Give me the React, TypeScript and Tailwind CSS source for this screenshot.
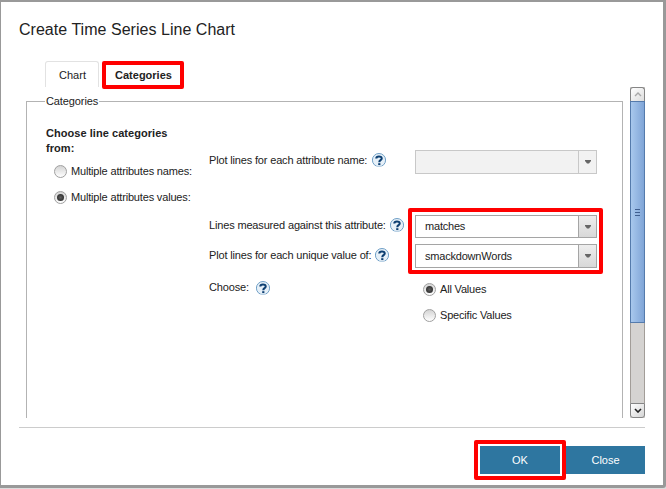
import React from 'react';

function Help() {
  return (
    <svg className="block h-[14px] w-[14px] shrink-0" viewBox="0 0 14 14" fill="none">
      <defs>
        <clipPath id="help-clip"><rect width="14" height="13.5" /></clipPath>
      </defs>
      <g clipPath="url(#help-clip)">
        <circle cx="7" cy="7.1" r="6.6" fill="#e6f0f8" stroke="#6f9fc6" strokeWidth="1" />
        <path d="M4.3 5.5C4.3 2.8 9.7 2.8 9.7 5.4C9.7 7.3 7.3 7 7.3 9.2" stroke="#0d3f72" strokeWidth="2.1" />
        <rect x="6.2" y="10.2" width="2.2" height="1.9" fill="#0d3f72" />
      </g>
    </svg>
  );
}

function Radio({ checked }: { checked?: boolean }) {
  return (
    <span className="flex h-[13px] w-[13px] shrink-0 items-center justify-center rounded-full border border-[#a0a0a0] bg-linear-to-b from-[#d4d4d4] to-[#ffffff]">
      {checked && <span className="h-[7px] w-[7px] rounded-full bg-radial from-[#606060] to-[#202020]" />}
    </span>
  );
}

function Select({ value, disabled, size }: { value: string; disabled?: boolean; size: string }) {
  return (
    <div className={`flex w-[182px] border ${size} ${disabled ? 'border-[#c8c8c8] bg-[#f2f2f2]' : 'border-[#a5a5a5] bg-white'}`}>
      <div className="flex flex-1 items-center pl-[9px] tracking-[-0.2px]">{value}</div>
      <div className={`flex w-[18px] items-center justify-center border-l ${disabled ? 'border-[#c8c8c8] bg-[#f2f2f2]' : 'border-[#a5a5a5] bg-linear-to-b from-[#eeeeee] to-[#d8d8d8]'}`}>
        <svg className="h-[4px] w-[6px]" viewBox="0 0 6 4"><path d="M0 0H6V1L4 3.5H2L0 1Z" fill="#666666" /></svg>
      </div>
    </div>
  );
}

function ScrollBar() {
  return (
    <div className="flex h-[331px] w-[15px] flex-col bg-[#d5d3d1]">
      <div className="flex h-[14px] items-center justify-center rounded-t-[3px] border border-b-0 border-[#858585] bg-linear-to-br from-white to-[#dddddd]">
        <svg className="h-[5px] w-[8px]" viewBox="0 0 8 5" fill="none"><path d="M1 4L4 1L7 4" stroke="#a8a8a8" strokeWidth="1.4" /></svg>
      </div>
      <div className="flex h-[222px] flex-col items-center justify-center gap-[2px] border border-[#557bac] bg-linear-to-r from-[#a8c8ed] to-[#80a5d7]">
        <i className="h-px w-[5px] bg-[#405f90]" />
        <i className="h-px w-[5px] bg-[#405f90]" />
        <i className="h-px w-[5px] bg-[#405f90]" />
      </div>
      <div className="h-[80px] border-x border-[#a29d98]" />
      <div className="flex h-[15px] items-center justify-center rounded-b-[3px] border border-[#858585] bg-linear-to-br from-white to-[#d5d5d5]">
        <svg className="h-[5px] w-[8px]" viewBox="0 0 8 5" fill="none"><path d="M1 1L4 4L7 1" stroke="#222222" strokeWidth="1.6" /></svg>
      </div>
    </div>
  );
}

export default function App() {
  return (
    <div className="h-[489px] w-[666px] overflow-hidden bg-[#dcdcdc] font-['Liberation_Sans',Arial,sans-serif] text-[11px] leading-[15px] text-[#222222]">
      <div className="flex h-[488px] flex-col rounded-br-[3px] border-t-2 border-r-[3px] border-b-[3px] border-l border-[#999999] bg-white pr-[18px] pl-[18px]">
        <h1 className="mt-[18px] h-[20px] text-[16px] leading-[20px] whitespace-nowrap tracking-[0.03px]">Create Time Series Line Chart</h1>
        <div className="mt-[21px] flex h-[26px] pl-[26px]">
          <div className="h-[26px] w-[54px] rounded-t-[3px] border border-b-0 border-[#e2e2e2] pt-[6px] pl-px text-center">Chart</div>
          <div className="ml-[3px] flex h-[28px] w-[82px] shrink-0 items-center justify-center rounded-[2px] border-4 border-[#ff0000] bg-white pl-px font-bold">Categories</div>
        </div>
        <div className="flex h-[331px] shrink-0 justify-between overflow-hidden">
          <div className="ml-[7px] w-[597px] pt-[7px]">
            <fieldset className="h-[350px] border border-[#b3b3b3] pl-[18px]">
              <legend className="px-px leading-[15px] tracking-[-0.1px]">Categories</legend>
              <div className="flex pl-px">
                <section className="w-[163px] pt-[17px] tracking-[-0.17px]">
                  <div className="w-[140px] font-bold tracking-[0.05px]">Choose line categories from:</div>
                  <label className="mt-[8px] ml-[8px] flex h-[15px] items-center gap-[4px] whitespace-nowrap"><Radio />Multiple attributes names:</label>
                  <label className="mt-[11px] ml-[8px] flex h-[15px] items-center gap-[4px] whitespace-nowrap"><Radio checked />Multiple attributes values:</label>
                </section>
                <section className="w-[199px] pt-[43px] tracking-[-0.16px] whitespace-nowrap">
                  <div className="flex h-[16px] items-center"><span className="w-[163px]">Plot lines for each attribute name:</span><Help /></div>
                  <div className="mt-[49px] flex h-[16px] items-center"><span className="w-[181px]">Lines measured against this attribute:</span><Help /></div>
                  <div className="mt-[14px] flex h-[16px] items-center"><span className="w-[166px]">Plot lines for each unique value of:</span><Help /></div>
                  <div className="mt-[17px] flex h-[16px] items-center"><span className="w-[47px] pb-[2px]">Choose:</span><Help /></div>
                </section>
                <section className="pt-[41px] tracking-[-0.18px]">
                  <div className="ml-[7px]"><Select value="" disabled size="h-[24px]" /></div>
                  <div className="mt-[34px] flex h-[66px] w-[195px] flex-col gap-[6px] rounded-[2px] border-4 border-[#ff0000] px-[3px] pt-[3px]">
                    <Select value="matches" size="h-[23px]" />
                    <Select value="smackdownWords" size="h-[24px]" />
                  </div>
                  <label className="mt-[8px] ml-[15px] flex h-[15px] items-center gap-[4px]"><Radio checked />All Values</label>
                  <label className="mt-[11px] ml-[15px] flex h-[15px] items-center gap-[4px]"><Radio />Specific Values</label>
                </section>
              </div>
            </fieldset>
          </div>
          <ScrollBar />
        </div>
        <footer className="mt-[9px] flex justify-end border-t border-[#cccccc] pt-[12px]">
          <div className="h-[40px] w-[92px] rounded-[2px] border-4 border-[#ff0000] p-[2px]">
            <button className="block h-[28px] w-[80px] bg-[#2e76a0] text-white">OK</button>
          </div>
          <button className="mt-[6px] block h-[28px] w-[79px] bg-[#2e76a0] text-white">Close</button>
        </footer>
      </div>
    </div>
  );
}
